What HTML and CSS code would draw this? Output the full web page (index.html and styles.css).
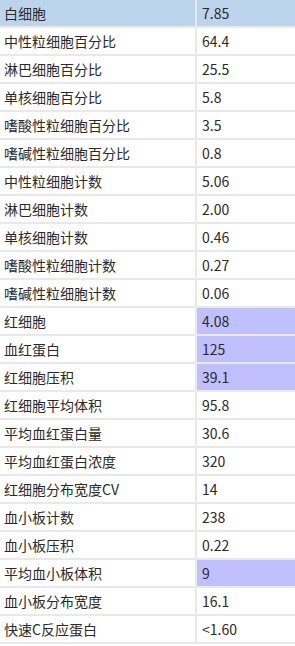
FILE: index.html
```html
<!DOCTYPE html>
<html lang="zh">
<head>
<meta charset="utf-8">
<title>血常规</title>
<link rel="stylesheet" href="styles.css">
</head>
<body>
<table class="results">
<tbody>
<tr class="head"><td class="name">白细胞</td><td class="val">7.85</td></tr>
<tr><td class="name">中性粒细胞百分比</td><td class="val">64.4</td></tr>
<tr><td class="name">淋巴细胞百分比</td><td class="val">25.5</td></tr>
<tr><td class="name">单核细胞百分比</td><td class="val">5.8</td></tr>
<tr><td class="name">嗜酸性粒细胞百分比</td><td class="val">3.5</td></tr>
<tr><td class="name">嗜碱性粒细胞百分比</td><td class="val">0.8</td></tr>
<tr><td class="name">中性粒细胞计数</td><td class="val">5.06</td></tr>
<tr><td class="name">淋巴细胞计数</td><td class="val">2.00</td></tr>
<tr><td class="name">单核细胞计数</td><td class="val">0.46</td></tr>
<tr><td class="name">嗜酸性粒细胞计数</td><td class="val">0.27</td></tr>
<tr><td class="name">嗜碱性粒细胞计数</td><td class="val">0.06</td></tr>
<tr><td class="name">红细胞</td><td class="val mark">4.08</td></tr>
<tr><td class="name">血红蛋白</td><td class="val mark">125</td></tr>
<tr><td class="name">红细胞压积</td><td class="val mark">39.1</td></tr>
<tr><td class="name">红细胞平均体积</td><td class="val">95.8</td></tr>
<tr><td class="name">平均血红蛋白量</td><td class="val">30.6</td></tr>
<tr><td class="name">平均血红蛋白浓度</td><td class="val">320</td></tr>
<tr><td class="name">红细胞分布宽度CV</td><td class="val">14</td></tr>
<tr><td class="name">血小板计数</td><td class="val">238</td></tr>
<tr><td class="name">血小板压积</td><td class="val">0.22</td></tr>
<tr><td class="name">平均血小板体积</td><td class="val mark">9</td></tr>
<tr><td class="name">血小板分布宽度</td><td class="val">16.1</td></tr>
<tr><td class="name">快速C反应蛋白</td><td class="val">&lt;1.60</td></tr>
</tbody>
</table>
</body>
</html>
```
FILE: styles.css
```css
html, body {
  margin: 0;
  padding: 0;
  background: #ffffff;
  overflow: hidden;
}

.results {
  border-collapse: collapse;
  width: 300px;
  margin-top: -2px;
  font-family: "Noto Sans CJK SC", "Microsoft YaHei", sans-serif;
  font-size: 14px;
  color: #2a2a2a;
}

.results td {
  height: 26px;
  padding: 0 0 0 4px;
  border: 2px solid #e9e9e9;
  border-left: none;
  line-height: 26px;
  white-space: nowrap;
  box-sizing: content-box;
}

.results td.name {
  width: 191px;
}

.results td.val {
  border-right: none;
  padding-left: 5px;
}

.head td {
  background: #bdd5ec;
}

.results td.mark {
  background: #c0c0ff;
}
```
